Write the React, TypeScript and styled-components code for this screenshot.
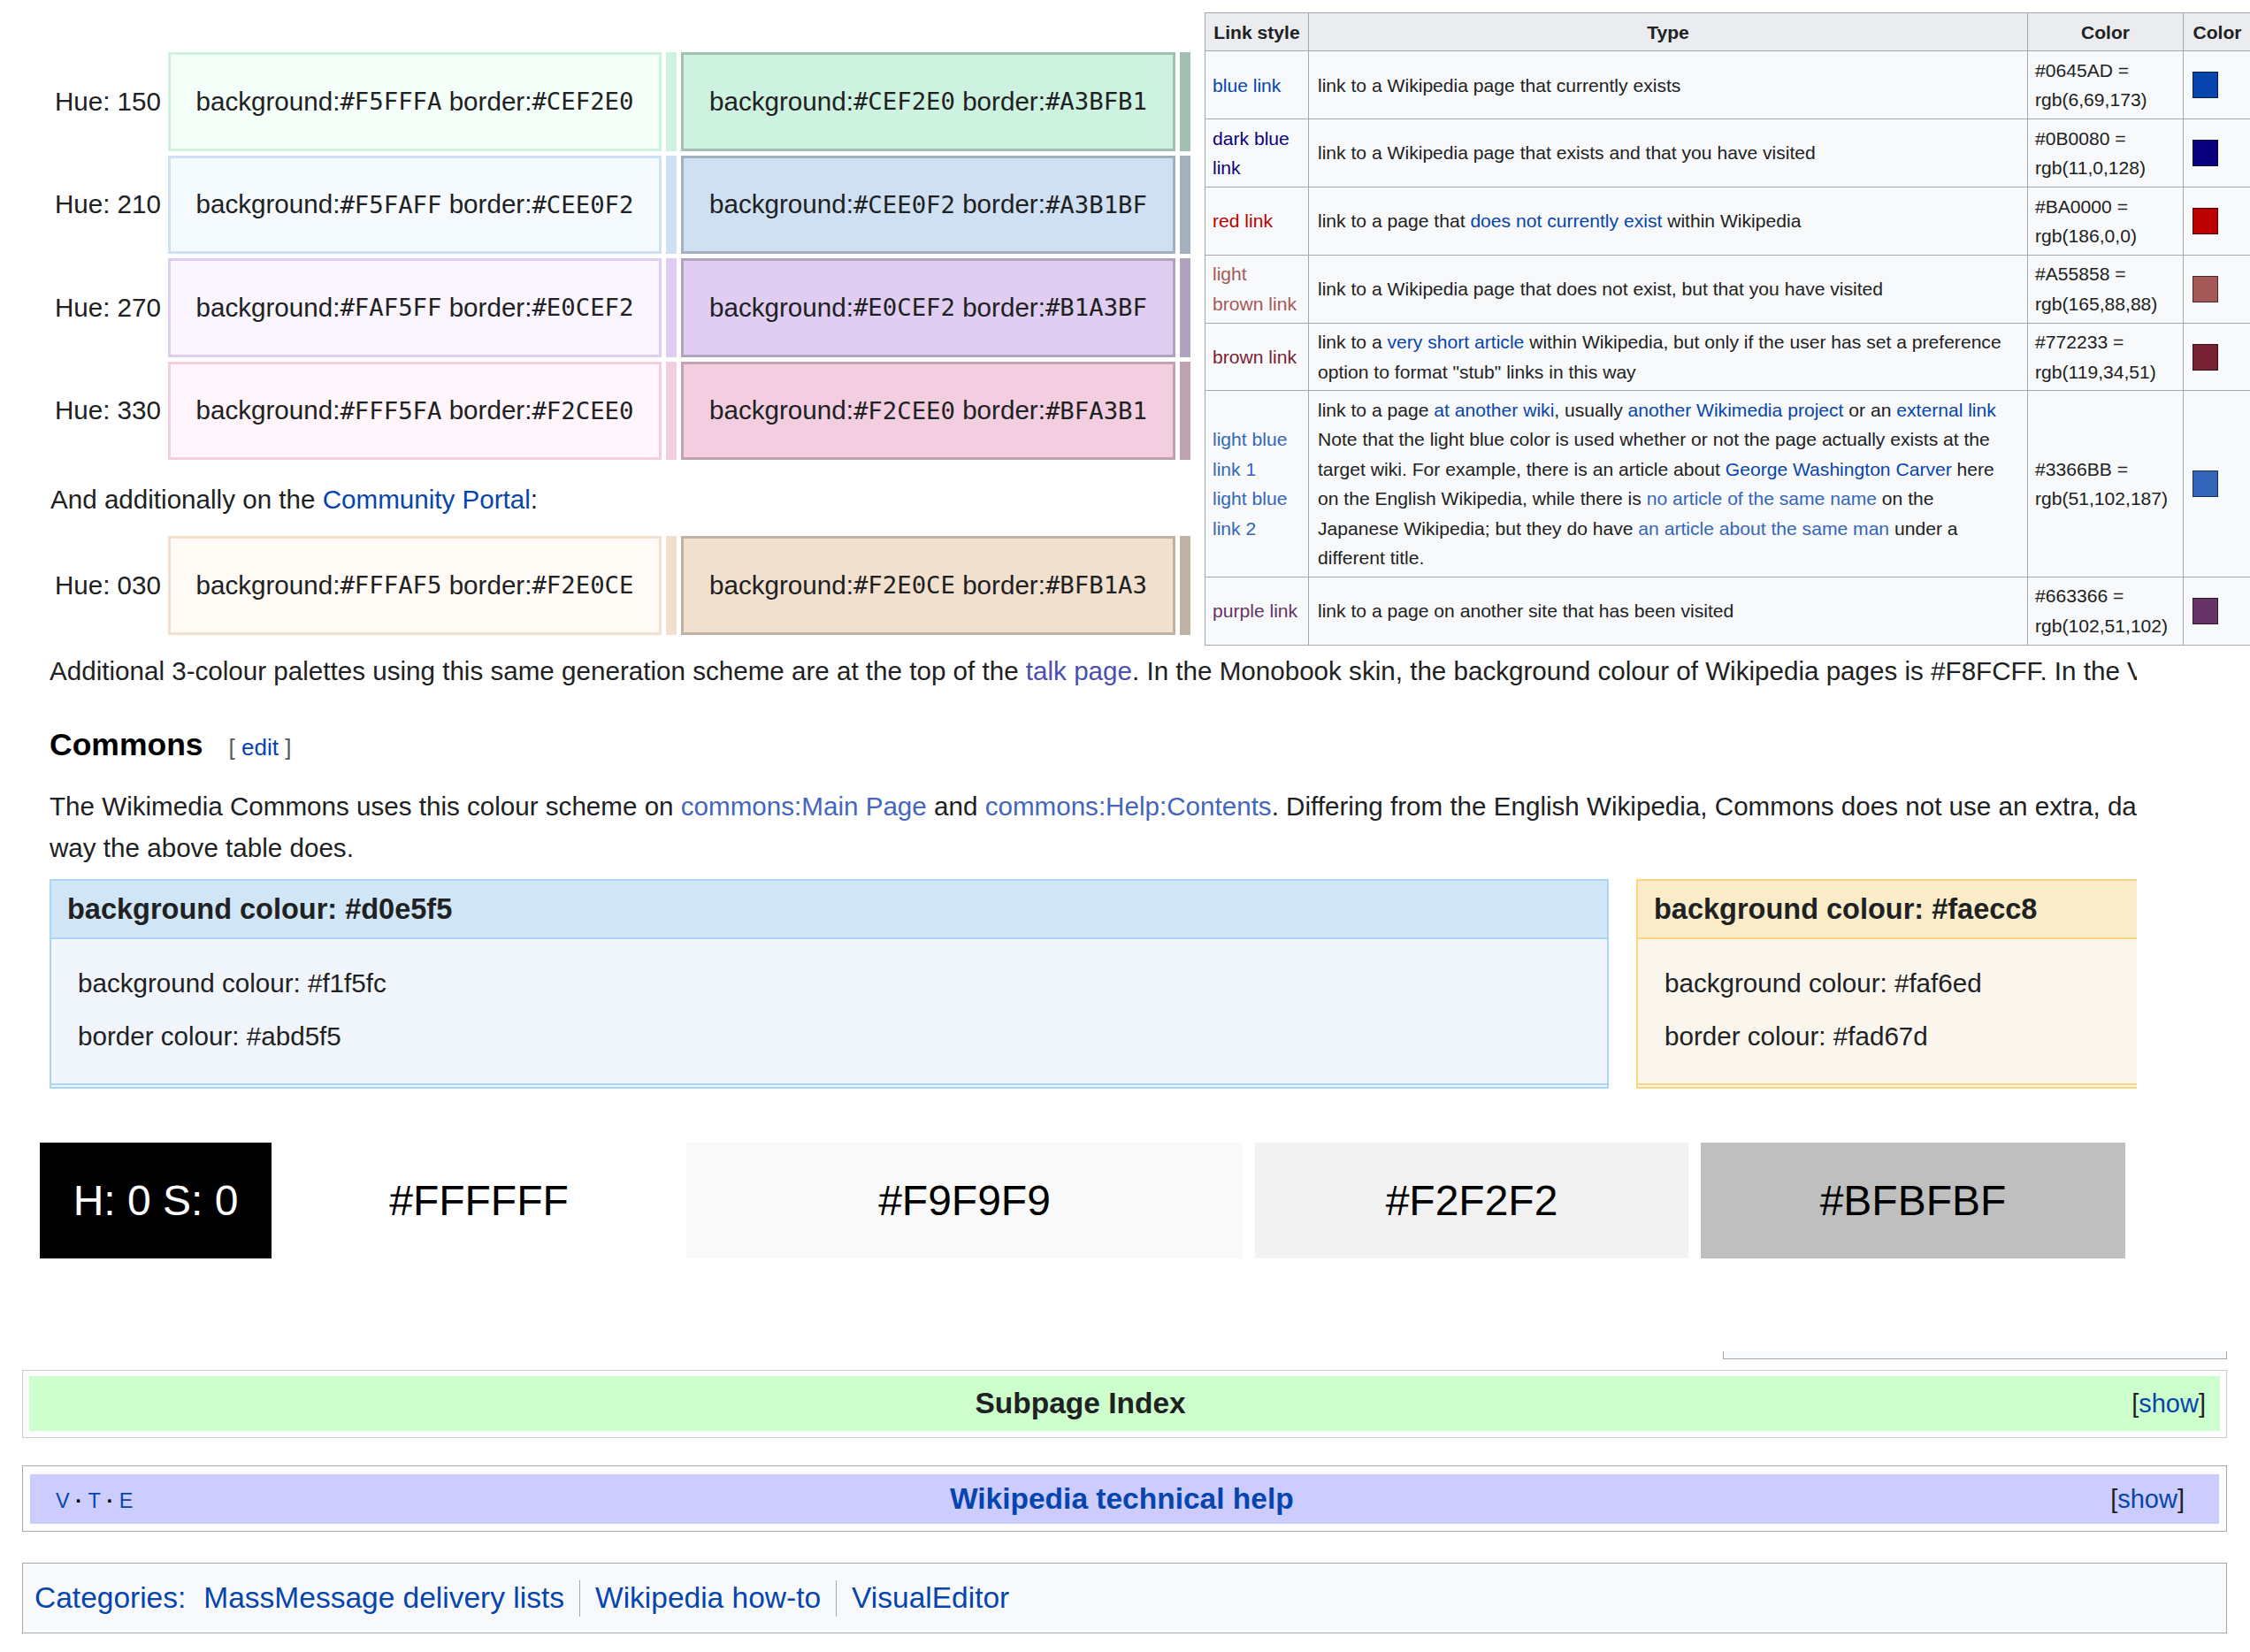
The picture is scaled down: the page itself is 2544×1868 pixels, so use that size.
import React from 'react';
import styled, { createGlobalStyle } from 'styled-components';

const GlobalStyle = createGlobalStyle`
  html, body {
    margin: 0;
    padding: 0;
    background: #ffffff;
  }
  body {
    font-family: "Liberation Sans", Arial, sans-serif;
    font-size: 29.6px;
    color: #202122;
    overflow: hidden;
  }
`;

const Page = styled.div`
  width: 2544px;
  height: 1868px;
  overflow: hidden;
`;

const Link = styled.a<{ $c?: string }>`
  color: ${({ $c }) => $c || '#0645ad'};
  text-decoration: none;
  cursor: pointer;
`;

/* ---------- top part: hue palettes + link table ---------- */

const TopSection = styled.div`
  display: flex;
  align-items: flex-start;
`;

const HueColumn = styled.div`
  flex: 0 0 1362px;
  box-sizing: border-box;
  padding: 59px 0 0 57px;
`;

const HueTable = styled.div<{ $top?: number }>`
  display: flex;
  flex-direction: column;
  gap: 5px;
  margin-top: ${({ $top }) => $top || 0}px;
`;

const HueRow = styled.div`
  display: grid;
  grid-template-columns: 128px 558px 12px 559px 12px;
  column-gap: 5px;
  height: 111.5px;
`;

const HueLabel = styled.div`
  display: flex;
  align-items: center;
  justify-content: flex-end;
  padding-right: 3px;
  white-space: nowrap;
`;

const HueCell = styled.div<{ $bg: string; $border: string }>`
  box-sizing: border-box;
  display: flex;
  align-items: center;
  justify-content: center;
  background: ${({ $bg }) => $bg};
  border: 3px solid ${({ $border }) => $border};
  white-space: nowrap;
`;

const HueStripe = styled.div<{ $c: string }>`
  background: ${({ $c }) => $c};
`;

const Code = styled.span`
  font-family: "DejaVu Sans Mono", "Liberation Mono", monospace;
  font-size: 27.3px;
`;

const Para = styled.p<{ $top?: number }>`
  margin: ${({ $top }) => $top || 0}px 0 0;
  line-height: 47px;
  white-space: nowrap;
`;

const LinkTable = styled.table`
  margin-top: 14px;
  flex: 0 0 auto;
  width: 1183px;
  table-layout: fixed;
  border-collapse: collapse;
  font-size: 21.1px;
  line-height: 33.4px;
  background: #f8f9fa;
  color: #202122;
`;

const Th = styled.th<{ $w: number }>`
  box-sizing: border-box;
  width: ${({ $w }) => $w}px;
  background: #eaecf0;
  border: 1px solid #a2a9b1;
  padding: 4.5px 8px;
  font-weight: bold;
  text-align: center;
  white-space: nowrap;
  overflow: hidden;
`;

const Td = styled.td<{ $pad?: number }>`
  border: 1px solid #a2a9b1;
  padding: 4.5px ${({ $pad }) => ($pad === undefined ? 10 : $pad)}px;
  vertical-align: middle;
  text-align: left;
`;

const Block = styled.span`
  display: block;
`;

const ColorChip = styled.span<{ $c: string }>`
  display: block;
  width: 29px;
  height: 30px;
  box-sizing: border-box;
  background: ${({ $c }) => $c};
  border: 1px solid rgba(0, 0, 0, 0.55);
`;

/* ---------- clipped text part ---------- */

const Clip = styled.div`
  margin: 5px 0 0 56px;
  width: 2360px;
  overflow: hidden;
`;

const ClipInner = styled.div`
  width: 3200px;
`;

const Heading = styled.h3`
  margin: 32px 0 0;
  font-size: 35.5px;
  line-height: 57px;
  font-weight: bold;
  color: #000;
`;

const EditSection = styled.span`
  margin-left: 29px;
  font-size: 26px;
  font-weight: normal;
  color: #54595d;
`;

const BoxRow = styled.div`
  display: flex;
  gap: 31px;
  margin-top: 12.5px;
  align-items: flex-start;
`;

const ColourBox = styled.div<{ $w: number; $border: string; $bg: string }>`
  width: ${({ $w }) => $w}px;
  box-sizing: border-box;
  border: 2px solid ${({ $border }) => $border};
  background: ${({ $bg }) => $bg};
  padding-bottom: 2px;
`;

const BoxHeader = styled.div<{ $bg: string; $border: string }>`
  height: 64px;
  display: flex;
  align-items: center;
  padding-left: 18px;
  background: ${({ $bg }) => $bg};
  border-bottom: 2px solid ${({ $border }) => $border};
  font-size: 32.5px;
  font-weight: bold;
  white-space: nowrap;
`;

const BoxBody = styled.div<{ $border: string }>`
  padding: 25.5px 0 30.5px 30px;
  border-bottom: 2px solid ${({ $border }) => $border};
  line-height: 47px;
  white-space: nowrap;
`;

const BoxLine = styled.div`
  & + & {
    margin-top: 13px;
  }
`;

/* ---------- grey swatches ---------- */

const SwatchRow = styled.div`
  display: flex;
  gap: 14px;
  margin: 61px 0 0 45px;
`;

const Swatch = styled.div<{ $bg: string; $w: number; $fg?: string }>`
  width: ${({ $w }) => $w}px;
  height: 131px;
  display: flex;
  align-items: center;
  justify-content: center;
  background: ${({ $bg }) => $bg};
  color: ${({ $fg }) => $fg || '#000'};
  font-size: 48px;
  white-space: nowrap;
`;

/* ---------- navboxes & categories ---------- */

const StrayBox = styled.div`
  margin: 105px 0 0 1948px;
  width: 570px;
  height: 9px;
  box-sizing: border-box;
  border: 1px solid #a2a9b1;
  border-top: none;
  background: #f8f9fa;
`;

const Navbox = styled.div<{ $top: number; $border: string; $pad: string }>`
  margin: ${({ $top }) => $top}px 0 0 25px;
  width: 2493px;
  box-sizing: border-box;
  border: 1px solid ${({ $border }) => $border};
  padding: ${({ $pad }) => $pad};
  background: #fdfdfd;
`;

const NavTitleBar = styled.div<{ $bg: string; $h: number }>`
  height: ${({ $h }) => $h}px;
  display: flex;
  align-items: center;
  background: ${({ $bg }) => $bg};
`;

const NavSide = styled.div<{ $align: 'left' | 'right'; $pad: number }>`
  flex: 0 0 97px;
  box-sizing: border-box;
  text-align: ${({ $align }) => $align};
  ${({ $align, $pad }) => ($align === 'left' ? `padding-left: ${$pad}px;` : `padding-right: ${$pad}px;`)}
  font-size: 29px;
  white-space: nowrap;
`;

const NavTitle = styled.div`
  flex: 1;
  text-align: center;
  font-size: 33.5px;
  font-weight: bold;
  color: #202122;
`;

const Vte = styled.span`
  font-size: 23.5px;
  font-weight: bold;
  color: #000;

  a {
    font-weight: normal;
  }
`;

const CatBox = styled.div`
  margin: 35px 0 0 25px;
  width: 2493px;
  height: 80px;
  box-sizing: border-box;
  border: 1px solid #a2a9b1;
  background: #f8f9fa;
  padding-left: 13px;
  display: flex;
  align-items: center;
  font-size: 33.5px;
  white-space: nowrap;
`;

const CatLabel = styled(Link)`
  margin-right: 20px;
`;

const CatItem = styled.span`
  display: flex;
  align-items: center;
  height: 41px;
  padding: 0 17px;
  border-left: 1px solid #a2a9b1;

  &:first-of-type {
    border-left: none;
    padding-left: 0;
  }
`;

const hues = [
  { label: '150', light: '#F5FFFA', mid: '#CEF2E0', dark: '#A3BFB1' },
  { label: '210', light: '#F5FAFF', mid: '#CEE0F2', dark: '#A3B1BF' },
  { label: '270', light: '#FAF5FF', mid: '#E0CEF2', dark: '#B1A3BF' },
  { label: '330', light: '#FFF5FA', mid: '#F2CEE0', dark: '#BFA3B1' },
];

const portalHue = { label: '030', light: '#FFFAF5', mid: '#F2E0CE', dark: '#BFB1A3' };

type Hue = typeof portalHue;

function PaletteRow({ hue }: { hue: Hue }) {
  return (
    <HueRow>
      <HueLabel>Hue: {hue.label}</HueLabel>
      <HueCell $bg={hue.light} $border={hue.mid}>
        background:<Code>{hue.light}</Code>&nbsp;border:<Code>{hue.mid}</Code>
      </HueCell>
      <HueStripe $c={hue.mid} />
      <HueCell $bg={hue.mid} $border={hue.dark}>
        background:<Code>{hue.mid}</Code>&nbsp;border:<Code>{hue.dark}</Code>
      </HueCell>
      <HueStripe $c={hue.dark} />
    </HueRow>
  );
}

const IN = '#0645ad';
const IW = '#3366bb';

const linkRows: { name: React.ReactNode; color: string; hex: string; rgb: string; type: React.ReactNode }[] = [
  { name: 'blue link', color: '#0645AD', hex: '#0645AD', rgb: 'rgb(6,69,173)', type: 'link to a Wikipedia page that currently exists' },
  { name: 'dark blue link', color: '#0B0080', hex: '#0B0080', rgb: 'rgb(11,0,128)', type: 'link to a Wikipedia page that exists and that you have visited' },
  {
    name: 'red link', color: '#BA0000', hex: '#BA0000', rgb: 'rgb(186,0,0)',
    type: <>link to a page that <Link $c={IN}>does not currently exist</Link> within Wikipedia</>,
  },
  { name: 'light brown link', color: '#A55858', hex: '#A55858', rgb: 'rgb(165,88,88)', type: 'link to a Wikipedia page that does not exist, but that you have visited' },
  {
    name: 'brown link', color: '#772233', hex: '#772233', rgb: 'rgb(119,34,51)',
    type: <>link to a <Link $c={IN}>very short article</Link> within Wikipedia, but only if the user has set a preference option to format "stub" links in this way</>,
  },
  {
    name: <><Block>light blue link 1</Block><Block>light blue link 2</Block></>,
    color: '#3366BB', hex: '#3366BB', rgb: 'rgb(51,102,187)',
    type: (
      <>
        link to a page <Link $c={IN}>at another wiki</Link>, usually <Link $c={IN}>another Wikimedia project</Link> or an <Link $c={IN}>external link</Link>
        <br />
        Note that the light blue color is used whether or not the page actually exists at the target wiki. For example, there is an article about <Link $c={IN}>George Washington Carver</Link> here on the English Wikipedia, while there is <Link $c={IW}>no article of the same name</Link> on the Japanese Wikipedia; but they do have <Link $c={IW}>an article about the same man</Link> under a different title.
      </>
    ),
  },
  { name: 'purple link', color: '#663366', hex: '#663366', rgb: 'rgb(102,51,102)', type: 'link to a page on another site that has been visited' },
];

const greys = [
  { text: 'H: 0 S: 0', bg: '#000000', fg: '#ffffff', w: 262 },
  { text: '#FFFFFF', bg: '#FFFFFF', w: 441 },
  { text: '#F9F9F9', bg: '#F9F9F9', w: 629 },
  { text: '#F2F2F2', bg: '#F2F2F2', w: 490 },
  { text: '#BFBFBF', bg: '#BFBFBF', w: 480 },
];

export default function App() {
  return (
    <Page>
      <GlobalStyle />
      <TopSection>
        <HueColumn>
          <HueTable>
            {hues.map((h) => (
              <PaletteRow key={h.label} hue={h} />
            ))}
          </HueTable>
          <Para $top={21}>
            And additionally on the <Link>Community Portal</Link>:
          </Para>
          <HueTable $top={18}>
            <PaletteRow hue={portalHue} />
          </HueTable>
        </HueColumn>

        <LinkTable>
          <thead>
            <tr>
              <Th $w={117}>Link style</Th>
              <Th $w={813}>Type</Th>
              <Th $w={176}>Color</Th>
              <Th $w={77}>Color</Th>
            </tr>
          </thead>
          <tbody>
            {linkRows.map((r) => (
              <tr key={r.hex}>
                <Td $pad={8}>
                  <Link $c={r.color}>{r.name}</Link>
                </Td>
                <Td>{r.type}</Td>
                <Td $pad={8}>
                  <Block>{r.hex} =</Block>
                  <Block>{r.rgb}</Block>
                </Td>
                <Td>
                  <ColorChip $c={r.color} />
                </Td>
              </tr>
            ))}
          </tbody>
        </LinkTable>
      </TopSection>

      <Clip>
        <ClipInner>
          <Para>
            Additional 3-colour palettes using this same generation scheme are at the top of the <Link $c="#4b50b0">talk page</Link>. In the Monobook skin, the background colour of Wikipedia pages is #F8FCFF. In the Vector skin, it is #FFFFFF.
          </Para>
          <Heading>
            Commons
            <EditSection>
              [ <Link>edit</Link> ]
            </EditSection>
          </Heading>
          <Para $top={14}>
            The Wikimedia Commons uses this colour scheme on <Link $c="#4466bb">commons:Main Page</Link> and <Link $c="#4466bb">commons:Help:Contents</Link>. Differing from the English Wikipedia, Commons does not use an extra, darker colour for the border of its headings the
            <br />
            way the above table does.
          </Para>
          <BoxRow>
            <ColourBox $w={1763} $border="#abd5f5" $bg="#f1f5fc">
              <BoxHeader $bg="#d0e5f5" $border="#abd5f5">background colour: #d0e5f5</BoxHeader>
              <BoxBody $border="#abd5f5">
                <BoxLine>background colour: #f1f5fc</BoxLine>
                <BoxLine>border colour: #abd5f5</BoxLine>
              </BoxBody>
            </ColourBox>
            <ColourBox $w={700} $border="#fad67d" $bg="#faf6ed">
              <BoxHeader $bg="#faecc8" $border="#fad67d">background colour: #faecc8</BoxHeader>
              <BoxBody $border="#fad67d">
                <BoxLine>background colour: #faf6ed</BoxLine>
                <BoxLine>border colour: #fad67d</BoxLine>
              </BoxBody>
            </ColourBox>
          </BoxRow>
        </ClipInner>
      </Clip>

      <SwatchRow>
        {greys.map((g) => (
          <Swatch key={g.text} $bg={g.bg} $fg={g.fg} $w={g.w}>
            {g.text}
          </Swatch>
        ))}
      </SwatchRow>

      <StrayBox />

      <Navbox $top={12} $border="#c8ccd1" $pad="6px 7px 7px 7px">
        <NavTitleBar $bg="#ccffcc" $h={62}>
          <NavTitle>Subpage Index</NavTitle>
          <NavSide $align="right" $pad={16}>
            [<Link>show</Link>]
          </NavSide>
        </NavTitleBar>
      </Navbox>

      <Navbox $top={31} $border="#a2a9b1" $pad="9px 8px 8px 8px">
        <NavTitleBar $bg="#ccccff" $h={56}>
          <NavSide $align="left" $pad={29}>
            <Vte>
              <Link>V</Link> · <Link>T</Link> · <Link>E</Link>
            </Vte>
          </NavSide>
          <NavTitle>
            <Link>Wikipedia technical help</Link>
          </NavTitle>
          <NavSide $align="right" $pad={39}>
            [<Link>show</Link>]
          </NavSide>
        </NavTitleBar>
      </Navbox>

      <CatBox>
        <CatLabel>Categories:</CatLabel>
        <CatItem>
          <Link>MassMessage delivery lists</Link>
        </CatItem>
        <CatItem>
          <Link>Wikipedia how-to</Link>
        </CatItem>
        <CatItem>
          <Link>VisualEditor</Link>
        </CatItem>
      </CatBox>
    </Page>
  );
}
